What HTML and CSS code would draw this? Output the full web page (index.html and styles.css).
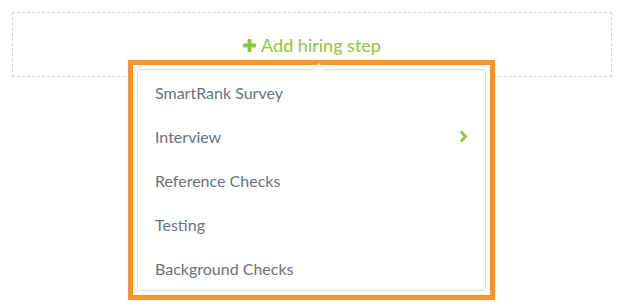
FILE: index.html
```html
<!doctype html>
<html>
    <head>
        <title>Hiring steps</title>
        <link rel="stylesheet" href="styles.css">
    </head>
    <body>
        <main class="steps">
            <div class="add-step">
                <button class="add-button">
                    <svg class="plus" width="13" height="13" viewBox="0 0 13 13">
                        <rect x="4.5" y="0" width="4" height="13" rx="1" />
                        <rect x="0" y="4.5" width="13" height="4" rx="1" />
                    </svg>
                    <span>Add hiring step</span>
                </button>
            </div>
            <div class="dropdown">
                <ul class="menu">
                    <li class="menu-item">SmartRank Survey</li>
                    <li class="menu-item">
                        <span>Interview</span>
                        <svg class="chevron" width="9" height="13" viewBox="0 0 9 13">
                            <path d="M1.8 1.6 L6.6 6.5 L1.8 11.4" />
                        </svg>
                    </li>
                    <li class="menu-item">Reference Checks</li>
                    <li class="menu-item">Testing</li>
                    <li class="menu-item">Background Checks</li>
                </ul>
            </div>
        </main>
    </body>
</html>
```

FILE: styles.css
```css
html,
body {
    margin: 0;
    background: #ffffff;
    font-family: Lato, "Open Sans", sans-serif;
}

.steps {
    position: relative;
    min-height: 307px;
    padding: 12px 10px 0 12px;
    box-sizing: border-box;
}

.add-step {
    height: 63px;
    border: 1px dashed #d6d6d6;
    display: flex;
    justify-content: center;
}

.add-button {
    display: flex;
    align-items: center;
    gap: 5px;
    margin-top: 20px;
    height: 24px;
    padding: 0;
    border: none;
    background: none;
    color: #8cc63f;
    font-family: inherit;
    font-size: 18px;
    cursor: pointer;
}

.plus {
    fill: #8cc63f;
}

.dropdown {
    position: absolute;
    top: 60px;
    left: 128px;
    width: 349px;
    padding: 4px;
    border: 5px solid #f7922c;
    background: #ffffff;
}

.menu {
    position: relative;
    list-style: none;
    margin: 0;
    padding: 0;
    border: 1px solid #dcdcdc;
    border-radius: 3px;
    background: #ffffff;
}

.menu::before,
.menu::after {
    content: "";
    position: absolute;
    left: 174px;
    border: 7px solid transparent;
    border-top: none;
}

.menu::before {
    top: -7px;
    border-bottom: 7px solid #dcdcdc;
}

.menu::after {
    top: -6px;
    border-bottom: 7px solid #ffffff;
}

.menu-item {
    display: flex;
    align-items: center;
    justify-content: space-between;
    height: 44px;
    padding: 0 17px 0 17px;
    color: #6a727c;
    font-size: 16px;
}

.chevron {
    fill: none;
    stroke: #8cc63f;
    stroke-width: 2.8;
}
```
